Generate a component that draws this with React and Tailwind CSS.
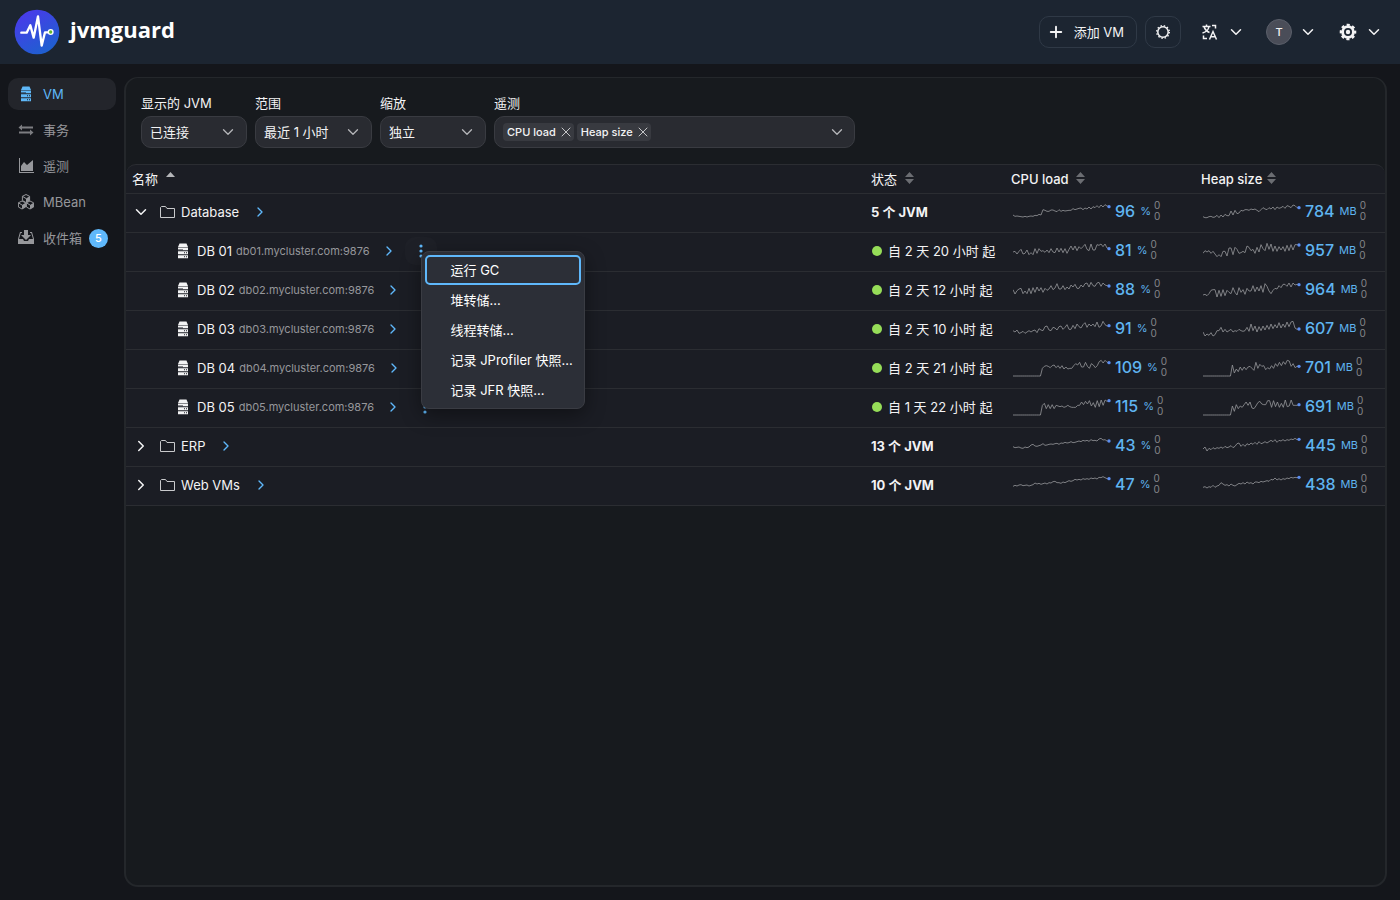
import React, { useState } from "react";
import { ChevronDown, ChevronRight, Plus, X } from "lucide-react";

const FLAT = [57, 57, 57, 57, 57, 57, 57, 57, 57, 57, 57, 57, 57, 57, 57];

const rows = [
  {
    id: "database", kind: "group", name: "Database", open: true, status: "5 个 JVM",
    cpu: { value: 96, data: [42, 46, 45, 46, 47, 48, 46, 48, 46, 45, 46, 43, 44, 40, 42, 26, 28, 31, 31, 27, 27, 30, 32, 26, 31, 28, 30, 29, 28, 28, 23, 26, 24, 22, 21, 26, 21, 24, 18, 24, 17, 20, 14, 20, 12, 18, 11, 15, 17] },
    heap: { value: 784, data: [47, 50, 50, 47, 46, 49, 48, 43, 50, 42, 48, 40, 44, 44, 30, 42, 28, 38, 36, 28, 30, 26, 26, 28, 24, 26, 24, 28, 32, 26, 20, 24, 26, 20, 24, 18, 26, 18, 22, 20, 16, 22, 14, 16, 20, 12, 14, 20, 20] },
  },
  {
    id: "db01", kind: "vm", name: "DB 01", host: "db01.mycluster.com:9876", status: "自 2 天 20 小时 起",
    cpu: { value: 81, data: [36, 34, 42, 34, 28, 42, 40, 30, 44, 38, 44, 26, 40, 26, 34, 32, 37, 30, 38, 26, 36, 38, 24, 36, 25, 38, 26, 40, 28, 18, 30, 18, 32, 20, 26, 20, 13, 28, 32, 12, 30, 30, 14, 16, 12, 20, 12, 24, 26] },
    heap: { value: 957, data: [40, 32, 36, 32, 40, 34, 42, 50, 44, 50, 34, 34, 48, 24, 24, 44, 22, 28, 40, 38, 34, 38, 18, 22, 32, 28, 40, 22, 36, 14, 26, 32, 10, 28, 12, 34, 18, 34, 20, 30, 20, 34, 16, 32, 14, 30, 14, 14, 15] },
  },
  {
    id: "db02", kind: "vm", name: "DB 02", host: "db02.mycluster.com:9876", status: "自 2 天 12 小时 起",
    cpu: { value: 88, data: [32, 45, 35, 30, 28, 44, 36, 44, 28, 44, 26, 40, 24, 36, 26, 40, 28, 34, 30, 20, 32, 27, 14, 30, 30, 20, 32, 24, 30, 18, 24, 16, 28, 28, 18, 24, 14, 12, 24, 10, 20, 22, 12, 10, 22, 12, 18, 20, 21] },
    heap: { value: 964, data: [48, 46, 50, 44, 34, 32, 32, 54, 34, 52, 32, 50, 34, 40, 44, 26, 40, 48, 26, 40, 32, 46, 28, 36, 36, 20, 38, 24, 36, 20, 40, 14, 22, 36, 44, 34, 28, 30, 20, 26, 16, 16, 22, 12, 24, 12, 18, 16, 17] },
  },
  {
    id: "db03", kind: "vm", name: "DB 03", host: "db03.mycluster.com:9876", status: "自 2 天 10 小时 起",
    cpu: { value: 91, data: [38, 42, 36, 46, 44, 40, 46, 42, 38, 42, 38, 36, 44, 32, 36, 38, 26, 24, 36, 38, 28, 30, 36, 26, 24, 34, 28, 20, 34, 34, 22, 32, 18, 26, 30, 20, 14, 28, 18, 24, 18, 26, 12, 28, 24, 10, 20, 24, 23] },
    heap: { value: 607, data: [42, 54, 48, 52, 44, 54, 50, 38, 38, 28, 42, 34, 42, 38, 34, 42, 38, 40, 34, 38, 40, 38, 28, 40, 18, 38, 24, 42, 26, 38, 24, 36, 22, 34, 18, 32, 20, 30, 14, 30, 18, 28, 12, 26, 12, 10, 30, 34, 33] },
  },
  {
    id: "db04", kind: "vm", name: "DB 04", host: "db04.mycluster.com:9876", status: "自 2 天 21 小时 起",
    cpu: { value: 109, data: [...FLAT, 34, 28, 26, 28, 32, 26, 24, 32, 26, 34, 26, 36, 30, 36, 34, 34, 26, 20, 24, 16, 30, 30, 16, 28, 34, 20, 24, 32, 26, 14, 10, 18, 10, 16, 17] },
    heap: { value: 701, data: [...FLAT, 24, 48, 36, 44, 30, 40, 30, 38, 30, 28, 34, 40, 16, 34, 22, 28, 26, 38, 32, 36, 26, 34, 20, 28, 16, 26, 14, 22, 10, 12, 28, 20, 32, 28, 28] },
  },
  {
    id: "db05", kind: "vm", name: "DB 05", host: "db05.mycluster.com:9876", status: "自 1 天 22 小时 起",
    cpu: { value: 115, data: [...FLAT, 28, 22, 38, 26, 38, 26, 38, 28, 30, 32, 30, 34, 32, 28, 32, 34, 34, 34, 28, 28, 18, 26, 16, 24, 14, 30, 20, 34, 14, 32, 12, 28, 12, 16, 14] },
    heap: { value: 691, data: [...FLAT, 30, 46, 26, 38, 30, 34, 26, 18, 28, 18, 36, 38, 30, 20, 16, 24, 26, 26, 14, 14, 34, 14, 32, 18, 34, 22, 34, 12, 32, 30, 12, 28, 28, 28, 26] },
  },
  {
    id: "erp", kind: "group", name: "ERP", open: false, status: "13 个 JVM",
    cpu: { value: 43, data: [35, 38, 37, 36, 39, 40, 36, 38, 36, 30, 28, 33, 34, 32, 30, 26, 31, 30, 28, 27, 28, 26, 25, 28, 24, 25, 22, 24, 23, 20, 23, 22, 20, 18, 20, 16, 18, 16, 19, 14, 17, 16, 18, 12, 10, 15, 14, 18, 18] },
    heap: { value: 445, data: [42, 36, 48, 40, 44, 38, 42, 38, 40, 36, 40, 34, 38, 36, 32, 38, 34, 26, 24, 34, 28, 34, 26, 30, 24, 28, 22, 28, 20, 26, 24, 20, 24, 20, 16, 20, 14, 22, 16, 18, 14, 18, 14, 16, 12, 14, 10, 14, 13] },
  },
  {
    id: "web", kind: "group", name: "Web VMs", open: false, status: "10 个 JVM",
    cpu: { value: 47, data: [37, 34, 36, 33, 32, 35, 34, 33, 36, 34, 32, 27, 30, 28, 31, 29, 27, 30, 26, 27, 23, 22, 26, 26, 28, 24, 26, 23, 20, 22, 20, 16, 18, 16, 18, 14, 16, 14, 16, 12, 14, 12, 15, 10, 11, 8, 11, 14, 14] },
    heap: { value: 438, data: [40, 38, 42, 38, 40, 34, 40, 36, 34, 26, 30, 34, 32, 36, 30, 34, 36, 32, 28, 30, 26, 30, 24, 28, 26, 30, 24, 24, 26, 22, 24, 22, 20, 22, 16, 18, 12, 18, 14, 18, 14, 16, 12, 14, 10, 12, 10, 11, 10] },
  },
];

const menuItems = ["运行 GC", "堆转储...", "线程转储...", "记录 JProfiler 快照...", "记录 JFR 快照..."];

function Logo() {
  return (
    <svg width="46" height="46" viewBox="0 0 138 138" aria-hidden="true">
      <defs>
        <linearGradient id="logo" x1="0" y1="0" x2="0.6" y2="1">
          <stop offset="0" stopColor="#4f35ee" />
          <stop offset="1" stopColor="#1f5fd0" />
        </linearGradient>
      </defs>
      <circle cx="69" cy="69" r="67" fill="url(#logo)" />
      <path d="M22 71H38L49 49L59 86L72 22L83 110L93 70H102" fill="none" stroke="#fff" strokeWidth="7" strokeLinecap="round" strokeLinejoin="round" />
      <circle cx="110" cy="69" r="7" fill="#62b92c" stroke="#fff" strokeWidth="4" />
    </svg>
  );
}

function ServerIcon() {
  return (
    <svg width="16" height="16" viewBox="0 0 16 16" fill="currentColor" aria-hidden="true">
      <path d="M4.5 0.5h7L13 4H3z" />
      <path d="M3 4.6h10v2.6H3z M3 8.2h10v3H3z M3 12.2h10v3H3z" />
      <path d="M3 6.4h5v0.9H3z M9 9.2h1v1H9z M11 9.2h1v1h-1z M9 13.2h1v1H9z M11 13.2h1v1h-1z" fill="#1b1d24" />
    </svg>
  );
}

function ExchangeIcon() {
  return (
    <svg width="16" height="16" viewBox="0 0 16 16" fill="currentColor" aria-hidden="true">
      <path d="M4 2.5v2h11v2H4v2L0.5 5.5z" opacity="0.8" />
      <path d="M12 7.5v2H1v2h11v2l3.500-3z" opacity="0.8" />
    </svg>
  );
}

function ChartIcon() {
  return (
    <svg width="16" height="16" viewBox="0 0 16 16" fill="currentColor" aria-hidden="true">
      <path d="M2 14V0H1v15h15v-1z" />
      <path d="M3 8l3-4 3 3 6-5v11H3z" />
    </svg>
  );
}

function CubesIcon() {
  const cube = "M0 -4L3.600 -2.200V2L0 4L-3.600 2V-2.200Z";
  return (
    <svg width="16" height="16" viewBox="0 0 16 16" aria-hidden="true">
      {[[8, 4.500], [4, 11], [12, 11]].map(([x, y]) => (
        <g key={x} transform={`translate(${x} ${y})`}>
          <path d={cube} fill="none" stroke="currentColor" strokeWidth="1" />
          <path d="M0 0L3.600 -2.200V2L0 4Z" fill="currentColor" />
          <path d="M-3.600 -2.200L0 0" stroke="currentColor" />
        </g>
      ))}
    </svg>
  );
}

function InboxIcon() {
  return (
    <svg width="16" height="16" viewBox="0 0 16 16" fill="currentColor" aria-hidden="true">
      <path d="M6 0h4v5h3L8 10 3 5h3z" />
      <path d="M4 2H2L0 9v5h16V9l-2-7h-2v1h1.200L15 9h-4l-1 2H6L5 9H1l1.800-6H4z" />
    </svg>
  );
}

function FolderIcon() {
  return (
    <svg width="16" height="16" viewBox="0 0 16 16" fill="none" stroke="currentColor" aria-hidden="true">
      <path d="M0.500 13.500V3.500L1.500 2.500H5.500L7 4.500H14.500V13.500Z" />
    </svg>
  );
}

function SunIcon() {
  return (
    <svg width="16" height="16" viewBox="0 0 16 16" fill="none" stroke="currentColor" aria-hidden="true">
      <circle cx="8" cy="8" r="5.200" strokeWidth="1.500" />
      <circle cx="8" cy="8" r="6.300" strokeWidth="1.400" strokeDasharray="1.400 1.899" />
    </svg>
  );
}

function LanguageIcon() {
  return (
    <svg width="18" height="18" viewBox="0 0 18 18" fill="none" stroke="currentColor" strokeWidth="1.500" aria-hidden="true">
      <path d="M1.500 3.500H9.500M5.500 1.500V3.500M3 3.500C4 7 6 8.500 8.500 9.500M8 3.500C7.500 6.500 5 9 1.500 10" />
      <path d="M8.500 16.500L12 8.500L15.500 16.500M9.800 13.800H14.200" />
      <path d="M11 2.500H14.500V5.500M2.500 12.500V15.500H6" />
    </svg>
  );
}

function CogIcon() {
  return (
    <svg width="18" height="18" viewBox="0 0 18 18" aria-hidden="true">
      <circle cx="9" cy="9" r="7" fill="none" stroke="currentColor" strokeWidth="2.600" strokeDasharray="3 2.498" strokeDashoffset="1.500" />
      <circle cx="9" cy="9" r="5.400" fill="none" stroke="currentColor" strokeWidth="2.800" />
      <circle cx="9" cy="9" r="2.200" fill="currentColor" />
    </svg>
  );
}

function SortIcon() {
  return (
    <svg width="9" height="12" viewBox="0 0 9 12" fill="#6b6d72" className="mb-[2px]" aria-hidden="true">
      <path d="M4.500 0L9 5H0z M0 7H9L4.500 12z" />
    </svg>
  );
}

const navItems = [
  { label: "VM", icon: ServerIcon, active: true },
  { label: "事务", icon: ExchangeIcon },
  { label: "遥测", icon: ChartIcon },
  { label: "MBean", icon: CubesIcon },
  { label: "收件箱", icon: InboxIcon, badge: 5 },
];

function Header() {
  return (
    <header className="flex h-16 items-center justify-between bg-[#1c2531] pl-[14px] pr-[17px]">
      <a href="#home" className="flex items-center gap-[10px]">
        <Logo />
        <span className="pb-[6px] font-['Open_Sans'] text-[22px] font-bold leading-7 text-white">jvmguard</span>
      </a>
      <div className="flex items-center">
        <button className="flex h-8 items-center gap-[9px] rounded-[10px] border border-[#2f3946] pl-[7px] pr-3">
          <Plus size={18} strokeWidth={2.5} />
          添加 VM
        </button>
        <button aria-label="主题" className="ml-2 flex h-8 w-9 items-center justify-center rounded-[10px] border border-[#2f3946]">
          <SunIcon />
        </button>
        <button aria-label="语言" className="ml-5 flex items-center gap-2">
          <LanguageIcon />
          <ChevronDown size={18} />
        </button>
        <button aria-label="用户" className="ml-[21px] flex items-center gap-[7px]">
          <span className="flex h-[26px] w-[26px] items-center justify-center rounded-full border border-[#5b5f6a] bg-[#4a4d58] text-[11px] font-medium">
            T
          </span>
          <ChevronDown size={18} />
        </button>
        <button aria-label="设置" className="ml-[22px] flex items-center gap-2">
          <CogIcon />
          <ChevronDown size={18} />
        </button>
      </div>
    </header>
  );
}

function Sidebar() {
  return (
    <nav className="flex w-[108px] shrink-0 flex-col gap-1 pt-px">
      {navItems.map(({ label, icon: Icon, active, badge }) => (
        <a
          key={label}
          href={`#${label}`}
          className={`flex h-8 items-center rounded-[10px] pl-[10px] ${
            active ? "bg-[#23252b] text-[#5fb8f8]" : "text-[#96979b]"
          }`}
        >
          <Icon />
          <span className="ml-[9px]">{label}</span>
          {badge && (
            <span className="ml-[7px] flex h-[19px] w-[19px] items-center justify-center rounded-full bg-[#5fb8fb] text-[11px] font-medium text-white">
              {badge}
            </span>
          )}
        </a>
      ))}
    </nav>
  );
}

function FilterSelect({ id, label, value, className }) {
  return (
    <div className={className}>
      <label htmlFor={id} className="block pb-[3px] leading-5">{label}</label>
      <div className="relative">
        <select
          id={id}
          className="h-8 w-full appearance-none rounded-[10px] border border-[#393b41] bg-[#292b31] pl-2 pr-8"
        >
          <option>{value}</option>
        </select>
        <ChevronDown size={18} strokeWidth={1.75} className="pointer-events-none absolute right-[10px] top-[7px] text-[#b5b6b9]" />
      </div>
    </div>
  );
}

function Filters() {
  const [telemetries, setTelemetries] = useState(["CPU load", "Heap size"]);

  return (
    <div className="flex gap-2 px-[15px] pb-4 pt-[15px]">
      <FilterSelect id="jvms" label="显示的 JVM" value="已连接" className="w-[106px]" />
      <FilterSelect id="range" label="范围" value="最近 1 小时" className="w-[117px]" />
      <FilterSelect id="scale" label="缩放" value="独立" className="w-[106px]" />
      <div className="w-[361px]">
        <label htmlFor="telemetry" className="block pb-[3px] leading-5">遥测</label>
        <div className="flex h-8 items-center gap-[3px] rounded-[10px] border border-[#393b41] bg-[#292b31] px-2">
          {telemetries.map((t) => (
            <span key={t} className="flex h-[18px] shrink-0 items-center gap-[2px] rounded bg-[#383a40] pl-1 text-[11px] font-medium">
              {t}
              <button
                aria-label={`移除 ${t}`}
                onClick={() => setTelemetries(telemetries.filter((x) => x !== t))}
              >
                <X size={16} strokeWidth={1.5} className="text-[#c5c6c8]" />
              </button>
            </span>
          ))}
          <input id="telemetry" className="min-w-0 flex-1 bg-transparent outline-none" />
          <button aria-label="展开" className="text-[#b5b6b9]">
            <ChevronDown size={18} strokeWidth={1.75} />
          </button>
        </div>
      </div>
    </div>
  );
}

function Sparkline({ data }) {
  const points = data.map((y, i) => `${(i * 288) / (data.length - 1)},${y}`).join(" ");
  return (
    <svg width="100" height="20" viewBox="0 0 300 60" className="shrink-0" aria-hidden="true">
      <polyline points={points} fill="none" stroke="#929396" strokeWidth="2.500" />
      <circle cx="288" cy={data[data.length - 1]} r="5" fill="#5b8def" />
    </svg>
  );
}

function Metric({ data, value, unit }) {
  return (
    <div className="flex items-center pb-[3px] pl-[2px] text-[#5fb4f0]">
      <Sparkline data={data} />
      <span className="ml-[2px] text-base font-medium leading-6">{value}</span>
      <span className="ml-[5px] text-[11px]">{unit}</span>
      <span className="ml-[3px] flex flex-col text-[10px] leading-[11px] text-[#85868a]">
        <span>0</span>
        <span>0</span>
      </span>
    </div>
  );
}

function ContextMenu() {
  return (
    <div
      role="menu"
      className="absolute left-1/2 top-1/2 z-10 flex w-[164px] flex-col rounded-lg border border-[#3a3c43] bg-[#2c2f37] p-[3px] text-white shadow-[0_6px_20px_rgba(0,0,0,0.4)]"
    >
      {menuItems.map((item, i) => (
        <button
          key={item}
          role="menuitem"
          className={`h-[30px] whitespace-nowrap rounded-[5px] border-2 pl-6 text-left ${
            i === 0 ? "border-[#5fb8fb]" : "border-transparent"
          }`}
        >
          {item}
        </button>
      ))}
    </div>
  );
}

function NameCell({ row, menuOpen, onToggleMenu }) {
  if (row.kind === "group") {
    return (
      <div className="flex items-center">
        <button aria-label={row.open ? "折叠" : "展开"} className="flex w-[18px] justify-center">
          {row.open ? <ChevronDown size={20} /> : <ChevronRight size={20} />}
        </button>
        <span className="ml-[10px] text-[#c9cacc]"><FolderIcon /></span>
        <span className="ml-[5px]">{row.name}</span>
        <button aria-label={`打开 ${row.name}`} className="ml-[5px] flex w-8 justify-center text-[#5fb8fb]">
          <ChevronRight size={16} />
        </button>
      </div>
    );
  }
  return (
    <div className="flex items-center pl-[43px]">
      <ServerIcon />
      <span className="ml-[6px]">{row.name}</span>
      <span className="ml-1 text-[11px] text-[#96979b]">{row.host}</span>
      <button aria-label={`打开 ${row.name}`} className="ml-[3px] flex w-8 justify-center text-[#5fb8fb]">
        <ChevronRight size={16} />
      </button>
      <div className="relative">
        <button
          aria-label={`${row.name} 菜单`}
          onClick={onToggleMenu}
          className={`flex h-7 w-8 items-center justify-center rounded-[10px] text-[#5fb8fb] ${menuOpen ? "bg-[#1e2027]" : ""}`}
        >
          <svg width="4" height="14" viewBox="0 0 4 14" fill="currentColor" aria-hidden="true">
            <circle cx="2" cy="2" r="1.600" />
            <circle cx="2" cy="7" r="1.600" />
            <circle cx="2" cy="12" r="1.600" />
          </svg>
        </button>
        {menuOpen && <ContextMenu />}
      </div>
    </div>
  );
}

function VmTable() {
  const [menuFor, setMenuFor] = useState("db01");

  return (
    <table className="w-full table-fixed border-separate border-spacing-0 rounded-t-[10px] border-t border-[#2b2d32] bg-[#1b1d24] text-left">
      <thead>
        <tr className="h-[29px] [&>th]:border-b [&>th]:border-[#2b2d32] [&>th]:px-[6px] [&>th]:py-0 [&>th]:font-medium">
          <th>
            <span className="flex items-center gap-2">
              <span className="font-normal">名称</span>
              <svg width="9" height="12" viewBox="0 0 9 12" fill="#b5b6b9" className="mb-1" aria-hidden="true">
                <path d="M4.500 1L9 6H0z" />
              </svg>
            </span>
          </th>
          <th className="w-[140px]"><span className="flex items-center gap-2"><span className="font-normal">状态</span> <SortIcon /></span></th>
          <th className="w-[190px]"><span className="flex items-center gap-[7px]">CPU load <SortIcon /></span></th>
          <th className="w-[190px]"><span className="flex items-center gap-[5px]">Heap size <SortIcon /></span></th>
        </tr>
      </thead>
      <tbody>
        {rows.map((row) => (
          <tr key={row.id} className="h-[39px] [&>td]:border-b [&>td]:border-[#2b2d32] [&>td]:px-[6px] [&>td]:pb-[2px] [&>td]:pt-0">
            <td>
              <NameCell
                row={row}
                menuOpen={menuFor === row.id}
                onToggleMenu={() => setMenuFor(menuFor === row.id ? null : row.id)}
              />
            </td>
            <td className="whitespace-nowrap">
              {row.kind === "group" ? (
                <span className="font-bold">{row.status}</span>
              ) : (
                <span className="flex items-center gap-[6px] pl-px">
                  <span className="h-[10px] w-[10px] rounded-full bg-[#96dd58]" />
                  {row.status}
                </span>
              )}
            </td>
            <td><Metric data={row.cpu.data} value={row.cpu.value} unit="%" /></td>
            <td><Metric data={row.heap.data} value={row.heap.value} unit="MB" /></td>
          </tr>
        ))}
      </tbody>
    </table>
  );
}

export default function App() {
  return (
    <div className="flex min-h-screen flex-col bg-[#14161b] font-[Inter,'Noto_Sans_CJK_SC',sans-serif] text-[13px] leading-5 text-[#f3f3f4]">
      <Header />
      <div className="flex flex-1 gap-2 pb-[13px] pl-2 pr-[13px] pt-[13px]">
        <Sidebar />
        <main className="min-w-0 flex-1 rounded-[14px] border-2 border-t border-[#24272b] bg-[#171a1e]">
          <Filters />
          <VmTable />
        </main>
      </div>
    </div>
  );
}
